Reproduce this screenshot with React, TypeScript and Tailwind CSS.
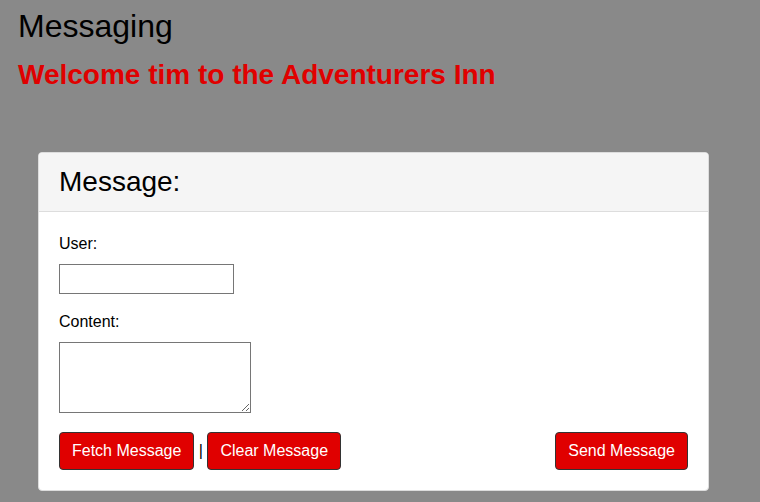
export default function App() {
  const btn =
    'h-[38px] px-3 rounded-[4px] border border-[#333] bg-[#e00000] text-white text-base leading-none';

  return (
    <div className="min-h-screen bg-[#898989] px-[18px] pt-[8px] font-['Liberation_Sans',Arial,sans-serif] text-black">
      <h1 className="text-[32px] leading-[37px]">Messaging</h1>
      <h2 className="mt-[14px] text-[28px] leading-[32px] font-bold text-[#e00000]">
        Welcome tim to the Adventurers Inn
      </h2>

      <div className="mt-[61px] ml-[20px] w-[671px] rounded-[4px] border border-[#dddddd] bg-white overflow-hidden">
        <div className="h-[59px] bg-[#f5f5f5] border-b border-[#dddddd] px-5 flex items-center">
          <span className="text-[28px] leading-none">Message:</span>
        </div>

        <div className="pt-[23px] px-5 pb-5">
          <label className="block text-base leading-[18px]">User:</label>
          <input
            type="text"
            className="mt-[11px] block w-[175px] h-[30px] border border-[#767676] bg-white"
          />
          <label className="mt-[19px] block text-base leading-[18px]">Content:</label>
          <textarea className="mt-[11px] block w-[192px] h-[71px] border border-[#767676] bg-white" />

          <div className="mt-[19px] flex items-center">
            <button className={btn}>Fetch Message</button>
            <span className="whitespace-pre text-base">{' | '}</span>
            <button className={btn}>Clear Message</button>
            <div className="flex-1" />
            <button className={btn}>Send Message</button>
          </div>
        </div>
      </div>
    </div>
  );
}
